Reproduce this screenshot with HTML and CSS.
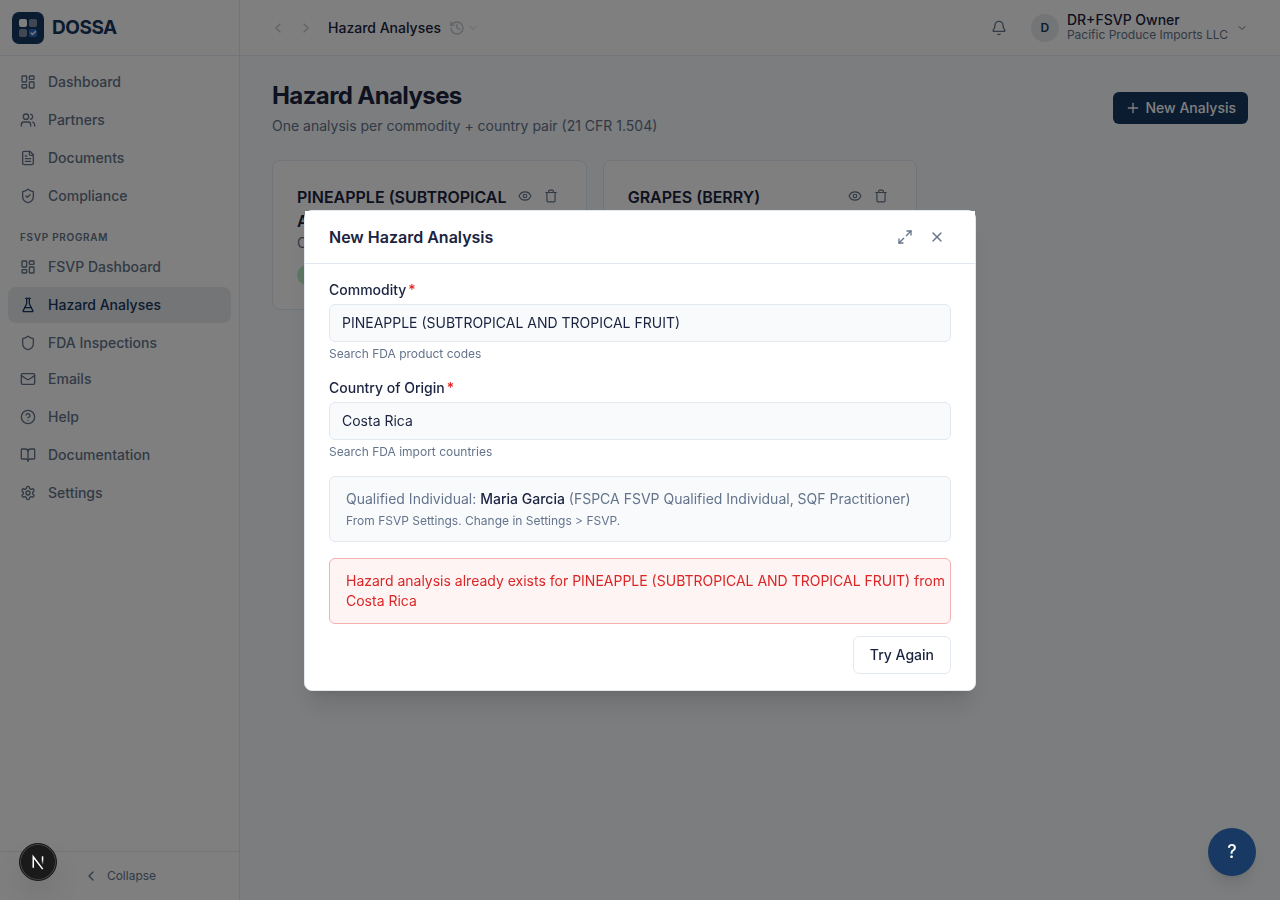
FILE: index.html
```html
<!DOCTYPE html>
<html lang="en">
<head>
    <meta charset="UTF-8">
    <meta name="viewport" content="width=device-width, initial-scale=1.0">
    <title>Hazard Analyses - DOSSA</title>
    <link rel="stylesheet" href="styles.css">
</head>
<body>

<div class="app">
    <aside class="sidebar">
        <div class="brand">
            <svg class="logo" viewBox="0 0 32 32">
                <rect width="32" height="32" rx="7" fill="#173760"/>
                <rect x="7" y="7" width="8" height="8" rx="2" fill="#fff"/>
                <rect x="17" y="7" width="8" height="8" rx="2" fill="#8091aa"/>
                <rect x="7" y="17" width="8" height="8" rx="2" fill="#8091aa"/>
                <rect x="17" y="17" width="8" height="8" rx="2" fill="#2f6fc4"/>
                <path d="m19 21 1.500 1.500 3-3" fill="none" stroke="#fff" stroke-width="1.200" stroke-linecap="round" stroke-linejoin="round"/>
            </svg>
            <span class="brand-name">DOSSA</span>
        </div>

        <nav class="nav">
            <a class="nav-item" href="#">
                <svg class="icon" viewBox="0 0 24 24"><rect x="3" y="3" width="7" height="9" rx="1"/><rect x="14" y="3" width="7" height="5" rx="1"/><rect x="14" y="12" width="7" height="9" rx="1"/><rect x="3" y="16" width="7" height="5" rx="1"/></svg>
                Dashboard
            </a>
            <a class="nav-item" href="#">
                <svg class="icon" viewBox="0 0 24 24"><path d="M16 21v-2a4 4 0 0 0-4-4H6a4 4 0 0 0-4 4v2"/><circle cx="9" cy="7" r="4"/><path d="M22 21v-2a4 4 0 0 0-3-3.870"/><path d="M16 3.130a4 4 0 0 1 0 7.750"/></svg>
                Partners
            </a>
            <a class="nav-item" href="#">
                <svg class="icon" viewBox="0 0 24 24"><path d="M15 2H6a2 2 0 0 0-2 2v16a2 2 0 0 0 2 2h12a2 2 0 0 0 2-2V7Z"/><path d="M14 2v4a2 2 0 0 0 2 2h4"/><path d="M10 9H8"/><path d="M16 13H8"/><path d="M16 17H8"/></svg>
                Documents
            </a>
            <a class="nav-item" href="#">
                <svg class="icon" viewBox="0 0 24 24"><path d="M20 13c0 5-3.500 7.500-7.660 8.950a1 1 0 0 1-.67-.01C7.500 20.500 4 18 4 13V6a1 1 0 0 1 1-1c2 0 4.500-1.200 6.240-2.720a1.170 1.170 0 0 1 1.520 0C14.510 3.810 17 5 19 5a1 1 0 0 1 1 1z"/><path d="m9 12 2 2 4-4"/></svg>
                Compliance
            </a>
            <div class="nav-heading">FSVP PROGRAM</div>
            <a class="nav-item" href="#">
                <svg class="icon" viewBox="0 0 24 24"><rect x="3" y="3" width="7" height="9" rx="1"/><rect x="14" y="3" width="7" height="5" rx="1"/><rect x="14" y="12" width="7" height="9" rx="1"/><rect x="3" y="16" width="7" height="5" rx="1"/></svg>
                FSVP Dashboard
            </a>
            <a class="nav-item active" href="#">
                <svg class="icon" viewBox="0 0 24 24"><path d="M10 2v7.530a2 2 0 0 1-.21.9L4.720 20.550a1 1 0 0 0 .9 1.450h12.760a1 1 0 0 0 .9-1.450l-5.070-10.130a2 2 0 0 1-.21-.9V2"/><path d="M8.500 2h7"/><path d="M7 16h10"/></svg>
                Hazard Analyses
            </a>
            <a class="nav-item last" href="#">
                <svg class="icon" viewBox="0 0 24 24"><path d="M20 13c0 5-3.500 7.500-7.660 8.950a1 1 0 0 1-.67-.01C7.500 20.500 4 18 4 13V6a1 1 0 0 1 1-1c2 0 4.500-1.200 6.240-2.720a1.170 1.170 0 0 1 1.520 0C14.510 3.810 17 5 19 5a1 1 0 0 1 1 1z"/></svg>
                FDA Inspections
            </a>
            <a class="nav-item" href="#">
                <svg class="icon" viewBox="0 0 24 24"><rect x="2" y="4" width="20" height="16" rx="2"/><path d="m22 7-8.970 5.700a1.940 1.940 0 0 1-2.060 0L2 7"/></svg>
                Emails
            </a>
            <a class="nav-item" href="#">
                <svg class="icon" viewBox="0 0 24 24"><circle cx="12" cy="12" r="10"/><path d="M9.090 9a3 3 0 0 1 5.830 1c0 2-3 3-3 3"/><path d="M12 17h.01"/></svg>
                Help
            </a>
            <a class="nav-item" href="#">
                <svg class="icon" viewBox="0 0 24 24"><path d="M12 7v14"/><path d="M3 18a1 1 0 0 1-1-1V4a1 1 0 0 1 1-1h5a4 4 0 0 1 4 4 4 4 0 0 1 4-4h5a1 1 0 0 1 1 1v13a1 1 0 0 1-1 1h-6a3 3 0 0 0-3 3 3 3 0 0 0-3-3z"/></svg>
                Documentation
            </a>
            <a class="nav-item" href="#">
                <svg class="icon" viewBox="0 0 24 24"><path d="M12.220 2h-.44a2 2 0 0 0-2 2v.18a2 2 0 0 1-1 1.730l-.43.25a2 2 0 0 1-2 0l-.15-.08a2 2 0 0 0-2.730.73l-.22.38a2 2 0 0 0 .73 2.730l.15.1a2 2 0 0 1 1 1.720v.51a2 2 0 0 1-1 1.740l-.15.09a2 2 0 0 0-.73 2.730l.22.38a2 2 0 0 0 2.730.73l.15-.08a2 2 0 0 1 2 0l.43.25a2 2 0 0 1 1 1.730V20a2 2 0 0 0 2 2h.44a2 2 0 0 0 2-2v-.18a2 2 0 0 1 1-1.730l.43-.25a2 2 0 0 1 2 0l.15.08a2 2 0 0 0 2.730-.73l.22-.39a2 2 0 0 0-.73-2.730l-.15-.08a2 2 0 0 1-1-1.740v-.5a2 2 0 0 1 1-1.740l.15-.09a2 2 0 0 0 .73-2.730l-.22-.38a2 2 0 0 0-2.730-.73l-.15.08a2 2 0 0 1-2 0l-.43-.25a2 2 0 0 1-1-1.730V4a2 2 0 0 0-2-2z"/><circle cx="12" cy="12" r="3"/></svg>
                Settings
            </a>
        </nav>

        <div class="sidebar-footer">
            <button class="collapse" type="button">
                <svg class="icon" viewBox="0 0 24 24"><path d="m15 18-6-6 6-6"/></svg>
                Collapse
            </button>
        </div>
    </aside>

    <div class="content">
        <header class="topbar">
            <button class="icon-button faint" type="button" aria-label="Back">
                <svg class="icon" viewBox="0 0 24 24"><path d="m15 18-6-6 6-6"/></svg>
            </button>
            <button class="icon-button faint" type="button" aria-label="Forward">
                <svg class="icon" viewBox="0 0 24 24"><path d="m9 18 6-6-6-6"/></svg>
            </button>
            <span class="crumb">Hazard Analyses</span>
            <button class="history faint" type="button" aria-label="History">
                <svg class="icon" viewBox="0 0 24 24"><path d="M3 12a9 9 0 1 0 9-9 9.750 9.750 0 0 0-6.740 2.740L3 8"/><path d="M3 3v5h5"/><path d="M12 7v5l4 2"/></svg>
                <svg class="icon small" viewBox="0 0 24 24"><path d="m6 9 6 6 6-6"/></svg>
            </button>
            <div class="account">
                <button class="icon-button" type="button" aria-label="Notifications">
                    <svg class="icon" viewBox="0 0 24 24"><path d="M10.268 21a2 2 0 0 0 3.464 0"/><path d="M3.262 15.326A1 1 0 0 0 4 17h16a1 1 0 0 0 .74-1.673C19.410 13.956 18 12.499 18 8A6 6 0 0 0 6 8c0 4.499-1.411 5.956-2.738 7.326"/></svg>
                </button>
                <button class="user" type="button">
                    <span class="avatar">D</span>
                    <span class="user-text">
                        <span class="user-name">DR+FSVP Owner</span>
                        <span class="user-org">Pacific Produce Imports LLC</span>
                    </span>
                    <svg class="icon small" viewBox="0 0 24 24"><path d="m6 9 6 6 6-6"/></svg>
                </button>
            </div>
        </header>

        <main class="main">
            <div class="page-head">
                <div>
                    <h1>Hazard Analyses</h1>
                    <p class="subtitle">One analysis per commodity + country pair (21 CFR 1.504)</p>
                </div>
                <button class="primary" type="button">
                    <svg class="icon" viewBox="0 0 24 24"><path d="M5 12h14"/><path d="M12 5v14"/></svg>
                    New Analysis
                </button>
            </div>

            <div class="cards">
                <article class="card">
                    <div class="card-head">
                        <h2>PINEAPPLE (SUBTROPICAL AND TROPICAL FRUIT)</h2>
                        <div class="card-actions">
                            <button type="button" aria-label="View"><svg class="icon" viewBox="0 0 24 24"><path d="M2.062 12.348a1 1 0 0 1 0-.696 10.750 10.750 0 0 1 19.876 0 1 1 0 0 1 0 .696 10.750 10.750 0 0 1-19.876 0"/><circle cx="12" cy="12" r="3"/></svg></button>
                            <button type="button" aria-label="Delete"><svg class="icon" viewBox="0 0 24 24"><path d="M3 6h18"/><path d="M19 6v14a2 2 0 0 1-2 2H7a2 2 0 0 1-2-2V6"/><path d="M8 6V4a2 2 0 0 1 2-2h4a2 2 0 0 1 2 2v2"/></svg></button>
                        </div>
                    </div>
                    <p class="card-country">Costa Rica</p>
                    <span class="badge"></span>
                </article>
                <article class="card">
                    <div class="card-head">
                        <h2>GRAPES (BERRY)</h2>
                        <div class="card-actions">
                            <button type="button" aria-label="View"><svg class="icon" viewBox="0 0 24 24"><path d="M2.062 12.348a1 1 0 0 1 0-.696 10.750 10.750 0 0 1 19.876 0 1 1 0 0 1 0 .696 10.750 10.750 0 0 1-19.876 0"/><circle cx="12" cy="12" r="3"/></svg></button>
                            <button type="button" aria-label="Delete"><svg class="icon" viewBox="0 0 24 24"><path d="M3 6h18"/><path d="M19 6v14a2 2 0 0 1-2 2H7a2 2 0 0 1-2-2V6"/><path d="M8 6V4a2 2 0 0 1 2-2h4a2 2 0 0 1 2 2v2"/></svg></button>
                        </div>
                    </div>
                </article>
            </div>
        </main>
    </div>
</div>

<div class="overlay">
    <form class="modal" role="dialog" aria-labelledby="modal-title">
        <div class="modal-head">
            <h2 id="modal-title">New Hazard Analysis</h2>
            <button class="icon-button" type="button" aria-label="Expand">
                <svg class="icon" viewBox="0 0 24 24"><path d="M15 3h6v6"/><path d="m21 3-7 7"/><path d="m3 21 7-7"/><path d="M9 21H3v-6"/></svg>
            </button>
            <button class="icon-button" type="button" aria-label="Close">
                <svg class="icon" viewBox="0 0 24 24"><path d="M18 6 6 18"/><path d="m6 6 12 12"/></svg>
            </button>
        </div>
        <div class="modal-body">
            <div class="field">
                <label for="commodity">Commodity<span class="required">*</span></label>
                <input type="text" id="commodity" value="PINEAPPLE (SUBTROPICAL AND TROPICAL FRUIT)">
                <p class="hint">Search FDA product codes</p>
            </div>
            <div class="field">
                <label for="country">Country of Origin<span class="required">*</span></label>
                <input type="text" id="country" value="Costa Rica">
                <p class="hint">Search FDA import countries</p>
            </div>
            <div class="notice">
                <p>Qualified Individual: <strong>Maria Garcia</strong> (FSPCA FSVP Qualified Individual, SQF Practitioner)</p>
                <p class="hint">From FSVP Settings. Change in Settings &gt; FSVP.</p>
            </div>
            <div class="notice error">
                <p>Hazard analysis already exists for PINEAPPLE (SUBTROPICAL AND TROPICAL FRUIT) from Costa Rica</p>
            </div>
            <div class="modal-actions">
                <button class="secondary" type="button">Try Again</button>
            </div>
        </div>
    </form>
</div>

<button class="help-button" type="button">?</button>
<button class="dev-badge" type="button" aria-label="Developer tools">
    <svg viewBox="0 0 38 38">
        <defs>
            <linearGradient id="fade" x1="0" y1="0" x2="0" y2="1"><stop offset="0.400" stop-color="#fff"/><stop offset="1" stop-color="#fff" stop-opacity="0"/></linearGradient>
        </defs>
        <path d="M14 25V13.500l10 13" fill="none" stroke="#fff" stroke-width="1.600"/>
        <rect x="23" y="13" width="1.600" height="9" fill="url(#fade)"/>
    </svg>
</button>

</body>
</html>
```
FILE: styles.css
```css
* {
    box-sizing: border-box;
}

body {
    margin: 0;
    font-family: Inter, sans-serif;
    font-size: 14px;
    line-height: 20px;
    color: #1a2340;
    background-color: #f8fafc;
}

h1, h2, p {
    margin: 0;
}

button {
    font: inherit;
    color: inherit;
    border: none;
    background: none;
    padding: 0;
    cursor: pointer;
}

.icon {
    width: 16px;
    height: 16px;
    flex-shrink: 0;
    fill: none;
    stroke: currentColor;
    stroke-width: 2;
    stroke-linecap: round;
    stroke-linejoin: round;
}

.icon.small {
    width: 12px;
    height: 12px;
}

.app {
    display: flex;
    min-height: 100vh;
}

/* sidebar */
.sidebar {
    display: flex;
    flex-direction: column;
    width: 240px;
    background-color: #fff;
    border-right: 1px solid #e2e8f0;
}

.brand {
    display: flex;
    align-items: center;
    gap: 8px;
    height: 56px;
    padding: 0 12px;
    border-bottom: 1px solid #e2e8f0;
}

.logo {
    width: 32px;
    height: 32px;
}

.brand-name {
    font-size: 19px;
    font-weight: 700;
    letter-spacing: -0.025em;
    color: #173760;
}

.nav {
    display: flex;
    flex-direction: column;
    flex: 1;
    gap: 2px;
    padding: 8px;
}

.nav-item {
    display: flex;
    align-items: center;
    gap: 12px;
    height: 36px;
    padding: 0 12px;
    border-radius: 8px;
    font-weight: 500;
    color: #64748b;
    text-decoration: none;
}

.nav-item.active {
    background-color: #e8ebef;
    color: #173760;
}

.nav-item.last {
    margin-bottom: -2px;
}

.nav-heading {
    padding: 14px 12px 2px;
    font-size: 10px;
    line-height: 15px;
    font-weight: 600;
    letter-spacing: 0.07em;
    color: #64748b;
}

.sidebar-footer {
    border-top: 1px solid #e2e8f0;
    padding: 8px;
}

.collapse {
    display: flex;
    align-items: center;
    justify-content: center;
    gap: 8px;
    width: 100%;
    height: 32px;
    font-size: 12px;
    color: #64748b;
}

/* top bar */
.content {
    flex: 1;
    min-width: 0;
}

.topbar {
    display: flex;
    align-items: center;
    height: 56px;
    padding: 0 32px 0 24px;
    background-color: #fff;
    border-bottom: 1px solid #e2e8f0;
}

.icon-button {
    display: flex;
    align-items: center;
    justify-content: center;
    width: 28px;
    height: 28px;
    color: #64748b;
}

.faint {
    color: #64748b;
    opacity: 0.4;
}

.crumb {
    margin: 0 8px;
    font-weight: 500;
}

.history {
    display: flex;
    align-items: center;
    gap: 2px;
}

.account {
    display: flex;
    align-items: center;
    gap: 18px;
    margin-left: auto;
}

.user {
    display: flex;
    align-items: center;
    gap: 8px;
    text-align: left;
    color: #64748b;
}

.avatar {
    display: flex;
    align-items: center;
    justify-content: center;
    width: 28px;
    height: 28px;
    border-radius: 50%;
    background-color: #e8ebef;
    color: #173760;
    font-size: 12px;
    font-weight: 600;
}

.user-text {
    display: flex;
    flex-direction: column;
    padding-bottom: 2px;
    line-height: 15px;
}

.user-name {
    font-weight: 500;
    color: #1a2340;
}

.user-org {
    font-size: 12px;
}

/* page */
.main {
    padding: 24px 32px;
}

.page-head {
    display: flex;
    align-items: center;
    justify-content: space-between;
    margin-bottom: 24px;
}

h1 {
    font-size: 24px;
    line-height: 32px;
    font-weight: 700;
    letter-spacing: -0.025em;
}

.subtitle {
    margin-top: 4px;
    color: #64748b;
}

.primary {
    display: flex;
    align-items: center;
    gap: 4px;
    height: 32px;
    padding: 0 12px;
    border-radius: 6px;
    background-color: #173760;
    color: #fff;
    font-weight: 500;
}

.cards {
    display: grid;
    grid-template-columns: repeat(3, 1fr);
    gap: 16px;
}

.card {
    padding: 24px;
    background-color: #fff;
    border: 1px solid #e2e8f0;
    border-radius: 8px;
}

.card-head {
    display: flex;
    align-items: flex-start;
    justify-content: space-between;
}

.card h2, .modal h2 {
    font-size: 16px;
    line-height: 24px;
    font-weight: 600;
}

.card-actions {
    display: flex;
    gap: 4px;
    color: #64748b;
}

.card-actions button {
    display: flex;
    align-items: center;
    justify-content: center;
    width: 22px;
    height: 22px;
}

.card-actions .icon {
    width: 14px;
    height: 14px;
}

.card-country {
    color: #64748b;
}

.badge {
    display: block;
    width: 72px;
    height: 20px;
    margin-top: 12px;
    border-radius: 10px;
    background-color: #bbf0cc;
}

/* modal */
.overlay {
    position: fixed;
    inset: 0;
    display: flex;
    align-items: center;
    justify-content: center;
    background-color: rgba(0, 0, 0, 0.5);
}

.modal {
    width: 100%;
    max-width: 672px;
    background-color: #fff;
    border: 1px solid #e2e8f0;
    border-radius: 8px;
    box-shadow: 0 20px 25px -5px rgba(0, 0, 0, 0.1), 0 8px 10px -6px rgba(0, 0, 0, 0.1);
}

.modal-head {
    display: flex;
    align-items: center;
    gap: 4px;
    padding: 12px 24px;
    background-color: #fff;
    border-bottom: 1px solid #e2e8f0;
}

.modal-head h2 {
    margin-right: auto;
}

.modal-body {
    display: flex;
    flex-direction: column;
    gap: 16px;
    padding: 16px 24px;
}

.field {
    display: flex;
    flex-direction: column;
    gap: 4px;
}

.field label {
    font-weight: 500;
}

.required {
    margin-left: 2px;
    color: #e62222;
}

.field input {
    width: 100%;
    height: 38px;
    padding: 0 12px;
    border: 1px solid #e2e8f0;
    border-radius: 6px;
    background-color: #f8fafc;
    font: inherit;
    color: inherit;
}

.hint {
    font-size: 12px;
    line-height: 16px;
    color: #64748b;
}

.notice {
    padding: 12px 16px;
    border: 1px solid #e2e8f0;
    border-radius: 6px;
    background-color: #f8fafc;
    color: #64748b;
}

.notice strong {
    font-weight: 500;
    color: #1a2340;
}

.notice .hint {
    margin-top: 4px;
}

.notice.error {
    padding-right: 4px;
    border-color: #f3b0b0;
    background-color: #fef4f3;
    color: #dc2626;
}

.modal-actions {
    display: flex;
    justify-content: flex-end;
    margin-top: -4px;
}

.secondary {
    height: 38px;
    padding: 0 16px;
    border: 1px solid #e2e8f0;
    border-radius: 6px;
    background-color: #fff;
    font-weight: 500;
}

/* floating buttons */
.help-button {
    position: fixed;
    right: 24px;
    bottom: 24px;
    width: 48px;
    height: 48px;
    border-radius: 50%;
    background-color: #173963;
    color: #fff;
    font-size: 18px;
    font-weight: 500;
    box-shadow: 0 10px 15px -3px rgba(0, 0, 0, 0.1), 0 4px 6px -4px rgba(0, 0, 0, 0.1);
}

.dev-badge {
    position: fixed;
    left: 19px;
    bottom: 19px;
    width: 38px;
    height: 38px;
    border: 1px solid #1a1a1a;
    border-radius: 50%;
    background-color: #1a1a1a;
    box-shadow: inset 0 0 0 1px #454545, 0 16px 32px -8px rgba(0, 0, 0, 0.24);
}

.dev-badge svg {
    display: block;
    width: 36px;
    height: 36px;
}
```
